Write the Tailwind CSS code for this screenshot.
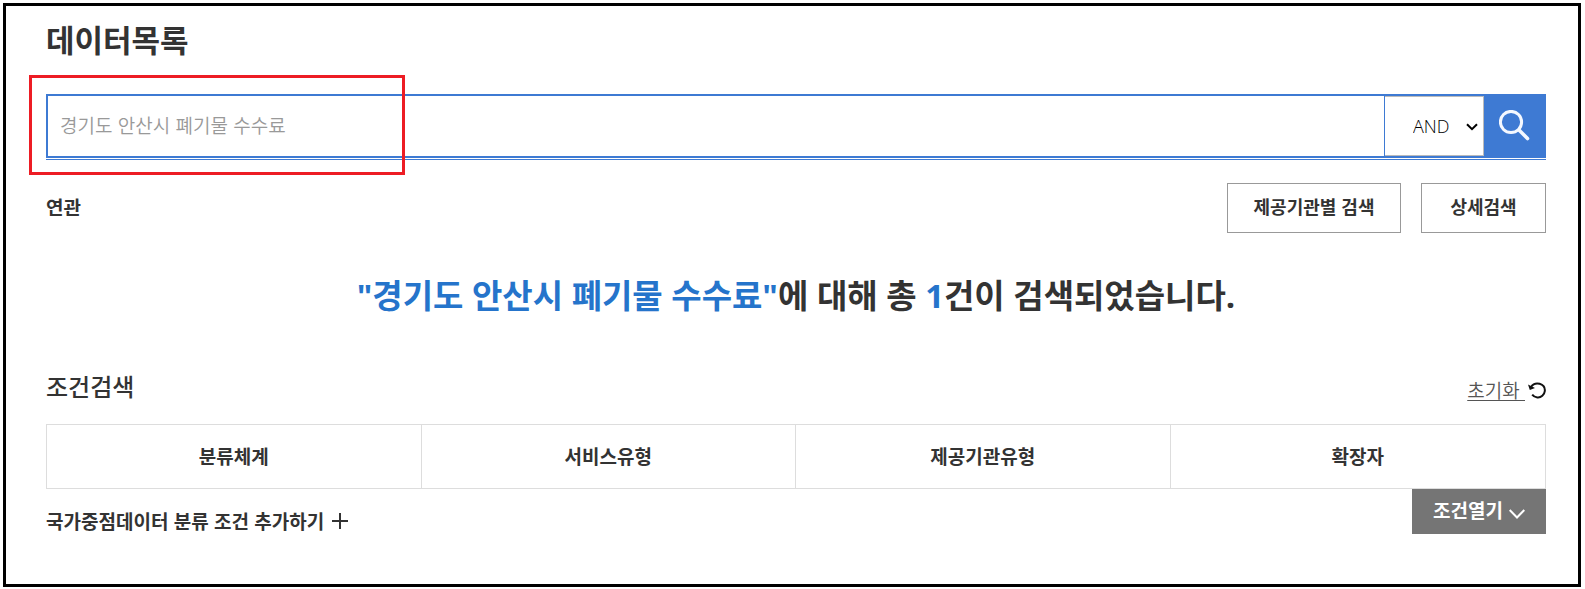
<!DOCTYPE html>
<html lang="ko">
<head>
<meta charset="utf-8">
<meta name="viewport" content="width=device-width, initial-scale=1">
<title>데이터목록</title>
<script src="https://cdn.jsdelivr.net/npm/@tailwindcss/browser@4"></script>
</head>
<body class="flex min-h-screen bg-white pt-[3px] pr-1 pb-0.5 pl-[3px] font-['Noto_Sans_CJK_KR',sans-serif] text-[#333]">
<main class="flex-1 border-3 border-black px-8 pt-2.5 pl-10">
  <h1 class="text-[31px] leading-[46px] font-bold">데이터목록</h1>

  <div class="relative mt-8">
    <form class="border-b border-[#3e7ad3] pb-px" onsubmit="return false">
      <div class="flex h-16 border-2 border-[#3e7ad3]">
        <input type="text" aria-label="검색어" placeholder="경기도 안산시 폐기물 수수료" class="min-w-0 flex-1 px-3 pb-0.5 text-[19px] font-[350] outline-none placeholder:text-[#999]">
        <div class="relative w-[100px] border-l border-[#3e7ad3]">
          <select aria-label="검색 연산자" class="h-full w-full appearance-none border border-l-0 border-[#bbb] bg-white pl-7 font-['Open_Sans','Noto_Sans_CJK_KR',sans-serif] text-[18px] font-[350] text-black">
            <option>AND</option>
            <option>OR</option>
          </select>
          <svg class="pointer-events-none absolute top-[27px] right-1.5 h-2 w-3" viewBox="0 0 12 8" fill="none" stroke="#000" stroke-width="2" aria-hidden="true"><path d="M1 1.2 6 6.2 11 1.2"/></svg>
        </div>
        <button type="submit" aria-label="검색" class="-my-0.5 -mr-0.5 w-[62px] bg-[#3e7ad3] pl-[15px]">
          <svg class="mb-0.5 h-[31px] w-[31px]" viewBox="0 0 31 31" fill="none" stroke="#f4f8ff" aria-hidden="true"><circle cx="12" cy="12" r="10.6" stroke-width="3"/><path d="M20 20 28.5 28.5" stroke-width="3.6" stroke-linecap="round"/></svg>
        </button>
      </div>
    </form>
    <div class="pointer-events-none absolute -top-[19px] -left-[17px] h-[100px] w-[376px] border-3 border-[#ed1c24]"></div>
  </div>

  <div class="mt-[23px] flex items-start justify-between">
    <p class="pt-3 text-[19px] leading-6 font-bold">연관</p>
    <div class="flex gap-5">
      <button type="button" class="h-[50px] w-[174px] border border-[#999] pb-1 text-[18px] font-bold">제공기관별 검색</button>
      <button type="button" class="h-[50px] w-[125px] border border-[#999] pb-1 text-[18px] font-bold">상세검색</button>
    </div>
  </div>

  <p class="mt-10 text-center font-['Open_Sans','Noto_Sans_CJK_KR',sans-serif] text-[33px] leading-[46px] font-bold"><strong class="font-bold text-[#2574cb]">"경기도 안산시 폐기물 수수료"</strong>에 대해 총 <strong class="font-bold text-[#2574cb]">1</strong>건이 검색되었습니다.</p>

  <div class="mt-[49px] flex items-center justify-between">
    <h2 class="text-[24px] leading-9 font-medium">조건검색</h2>
    <a href="#" class="flex items-center gap-[3px] pt-2 text-[19px] leading-7 font-[350] text-[#555]"><span class="whitespace-pre underline underline-offset-2">초기화 </span>
      <svg class="h-[17px] w-[18px]" viewBox="0 0 18 17" fill="none" stroke="#111" aria-hidden="true"><path d="M2.8 5.2C5 2 8.5.9 11.6 1.8c3.3 1 5.6 3.8 5.2 7.3-.4 3.8-3.7 6.7-7.5 6.3-2.1-.2-3.9-1.2-5.1-2.8" stroke-width="2"/><path d="M0 2.4 1.8 8 7 6Z" fill="#111" stroke="none"/></svg>
    </a>
  </div>

  <div class="mt-5 grid h-[65px] grid-cols-4 divide-x divide-[#ddd] border border-[#ddd] text-[19px] font-bold">
    <button type="button">분류체계</button>
    <button type="button">서비스유형</button>
    <button type="button">제공기관유형</button>
    <button type="button">확장자</button>
  </div>

  <div class="flex items-start justify-between">
    <button type="button" class="mt-[18px] flex items-center gap-2 text-[19px] leading-7 font-bold">국가중점데이터 분류 조건 추가하기
      <svg class="h-4 w-4" viewBox="0 0 16 16" stroke="#333" stroke-width="2" aria-hidden="true"><path d="M8 0v16M0 8h16"/></svg>
    </button>
    <button type="button" class="flex h-[45px] w-[134px] items-center justify-center gap-1.5 bg-[#757575] pb-0.5 text-[19px] font-bold text-white">조건열기
      <svg class="mt-1.5 h-2.5 w-4" viewBox="0 0 16 10" fill="none" stroke="#fff" stroke-width="2" aria-hidden="true"><path d="M.7 1 8 8.5 15.3 1"/></svg>
    </button>
  </div>
</main>
</body>
</html>
